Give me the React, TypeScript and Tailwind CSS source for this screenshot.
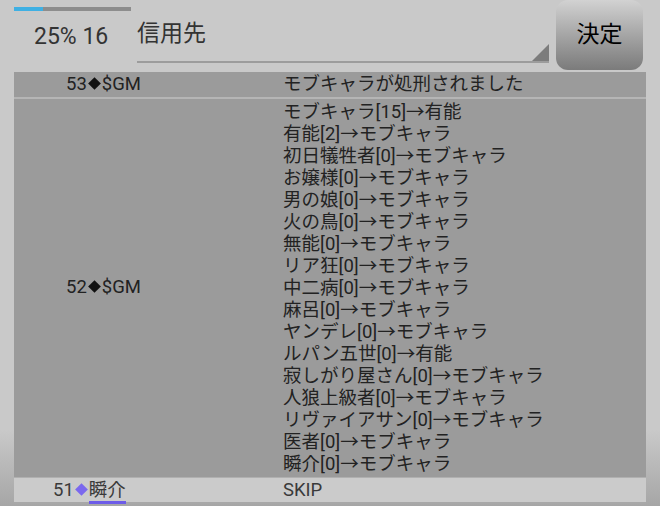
import React from "react";

const jp = { fontFamily: 'Roboto, "Noto Sans CJK JP", sans-serif' };

const votes = [
  "モブキャラ[15]→有能",
  "有能[2]→モブキャラ",
  "初日犠牲者[0]→モブキャラ",
  "お嬢様[0]→モブキャラ",
  "男の娘[0]→モブキャラ",
  "火の鳥[0]→モブキャラ",
  "無能[0]→モブキャラ",
  "リア狂[0]→モブキャラ",
  "中二病[0]→モブキャラ",
  "麻呂[0]→モブキャラ",
  "ヤンデレ[0]→モブキャラ",
  "ルパン五世[0]→有能",
  "寂しがり屋さん[0]→モブキャラ",
  "人狼上級者[0]→モブキャラ",
  "リヴァイアサン[0]→モブキャラ",
  "医者[0]→モブキャラ",
  "瞬介[0]→モブキャラ",
];

const Diamond = ({ color }: { color: string }) => (
  <span className={`inline-block w-[9px] h-[9px] rotate-45 mx-[3px] align-[2px] ${color}`} />
);

const App = () => {
  return (
    <div
      className="w-[660px] h-[506px] overflow-hidden text-[#222] bg-gradient-to-b from-[#c9c9c9] from-85% to-[#a6a6a6]"
      style={jp}
    >
      {/* header */}
      <div className="flex h-[72px]">
        <div className="w-[137px] shrink-0 flex flex-col">
          <div className="ml-[14px] mt-[7px] w-[117px] h-[4px] bg-[#8d8d8d] flex">
            <div className="w-[29px] h-full bg-[#3fb0e3]" />
          </div>
          <div className="pl-[34px] pt-[12px] text-[23px] leading-[28px] text-[#333]">25% 16</div>
        </div>
        <div className="w-[412px] shrink-0 relative h-[63px] border-b-2 border-[#9c9c9c]">
          <div className="pt-[18px] text-[23px] leading-[31px] text-[#333]">信用先</div>
          <div className="absolute right-0 bottom-0 w-0 h-0 border-l-[17px] border-l-transparent border-b-[17px] border-b-[#7c7c7c]" />
        </div>
        <div className="ml-[7px] w-[87px] h-[70px] rounded-[12px] bg-gradient-to-b from-[#d2d2d2] to-[#7b7b7b] flex items-center justify-center text-[23px] text-black">
          決定
        </div>
      </div>

      {/* log table */}
      <div className="mx-[14px] flex flex-col text-[18.5px]">
        <div className="flex h-[27px] leading-[25px] bg-[#9b9b9b] border-b-2 border-[#b5b5b5]">
          <div className="w-[269px] pl-[52px]">
            53<Diamond color="bg-[#111]" />$GM
          </div>
          <div>モブキャラが処刑されました</div>
        </div>
        <div className="flex bg-[#9b9b9b] pt-[2px] pb-[2px]">
          <div className="w-[269px] pl-[52px] flex items-center">
            <span>
              52<Diamond color="bg-[#111]" />$GM
            </span>
          </div>
          <div className="flex flex-col leading-[22px]">
            {votes.map((v) => (
              <div key={v}>{v}</div>
            ))}
          </div>
        </div>
        <div className="flex h-[27px] leading-[25px] bg-[#cbcbcb] border-t border-[#b0b0b0] border-b-2 border-b-[#a8a8a8] text-[#3a3a3a]">
          <div className="w-[269px] pl-[39px]">
            51<Diamond color="bg-[#7b68ee]" />
            <span className="border-b-[3px] border-[#6d5ce8]">瞬介</span>
          </div>
          <div>SKIP</div>
        </div>
      </div>
    </div>
  );
};

export default App;
